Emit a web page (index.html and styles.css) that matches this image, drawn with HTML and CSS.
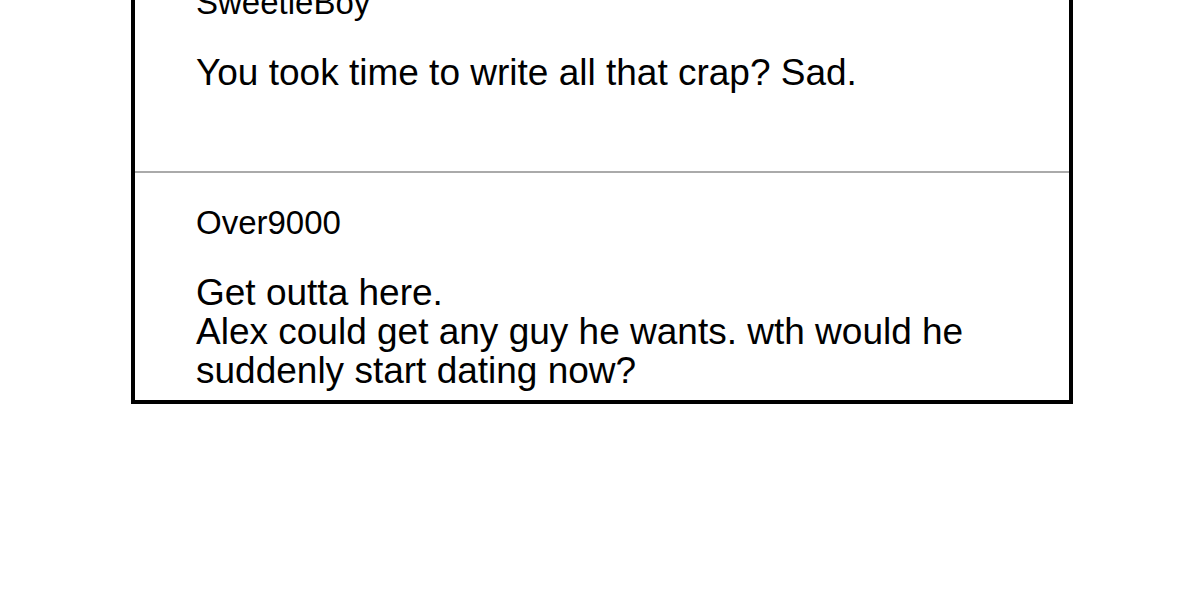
FILE: index.html
```html
<!DOCTYPE html>
<html lang="en">
<head>
    <meta charset="UTF-8">
    <meta name="viewport" content="width=device-width, initial-scale=1.0">
    <title>Comments</title>
    <link rel="stylesheet" href="styles.css">
</head>
<body>

    <div class="thread">
        <div class="comment">
            <div class="user">SweetieBoy</div>
            <p class="text">You took time to write all that crap? Sad.</p>
        </div>
        <div class="comment">
            <div class="user">Over9000</div>
            <p class="text">Get outta here.<br>Alex could get any guy he wants. wth would he suddenly start dating now?</p>
        </div>
    </div>

</body>
</html>
```

FILE: styles.css
```css
body {
    margin: 0;
    background-color: #fff;
    font-family: 'Liberation Sans', Arial, sans-serif;
    color: #000;
}
.thread {
    width: 934px;
    margin: -51px 0 0 131px;
    border: 4px solid #000;
    background-color: #fff;
}
.comment {
    box-sizing: border-box;
    min-height: 218px;
    padding: 31px 60px 10px 61px;
}
.comment + .comment {
    border-top: 2px solid #aaa;
}
.user {
    font-size: 33px;
    line-height: 38px;
}
.text {
    margin: 31px 0 0 0;
    font-size: 37px;
    line-height: 39px;
}
```
